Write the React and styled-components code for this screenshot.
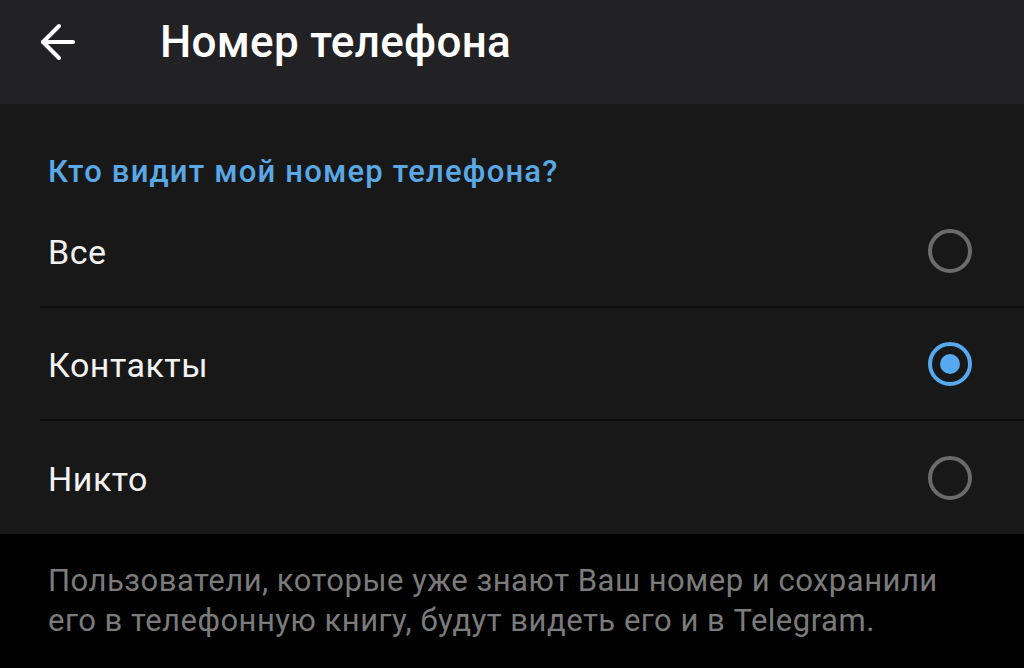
import React, { useState } from "react";
import styled, { createGlobalStyle } from "styled-components";

const GlobalStyle = createGlobalStyle`
  html, body {
    margin: 0;
    padding: 0;
    background: #000;
  }
  body {
    font-family: Roboto, "Noto Sans", sans-serif;
    -webkit-font-smoothing: antialiased;
  }
`;

const Screen = styled.div`
  width: 1024px;
  height: 668px;
  display: flex;
  flex-direction: column;
  background: #000;
  overflow: hidden;
`;

const Toolbar = styled.header`
  height: 104px;
  background: #222225;
  display: flex;
  align-items: center;
  padding-left: 34px;
  padding-bottom: 20px;
  box-sizing: border-box;
`;

const BackButton = styled.button`
  width: 48px;
  height: 48px;
  display: flex;
  align-items: center;
  justify-content: center;
  background: none;
  border: 0;
  padding: 0;
  cursor: pointer;
`;

const Title = styled.h1`
  margin: 0 0 0 78px;
  color: #fff;
  font-size: 44px;
  font-weight: 500;
  letter-spacing: 0.3px;
`;

const Section = styled.section`
  background: #181818;
  padding-top: 45px;
`;

const SectionHeader = styled.div`
  color: #5aa8e6;
  font-size: 31px;
  font-weight: 500;
  letter-spacing: 1.2px;
  padding-left: 48px;
  height: 46px;
  line-height: 46px;
`;

const Row = styled.label`
  display: flex;
  align-items: center;
  justify-content: space-between;
  height: 113px;
  padding-right: 52px;
  padding-left: ${(p) => (p.$last ? "48px" : "8px")};
  margin-left: ${(p) => (p.$last ? "0" : "40px")};
  box-sizing: border-box;
  cursor: pointer;
  border-bottom: ${(p) => (p.$last ? "none" : "2px solid #0c0c0c")};
`;

const RowText = styled.span`
  color: #f2f2f2;
  font-size: 34px;
  font-weight: 400;
  letter-spacing: 0.5px;
  padding-top: 2px;
`;

const Radio = styled.span`
  width: 44px;
  height: 44px;
  border-radius: 50%;
  box-sizing: border-box;
  border: 4px solid ${(p) => (p.$checked ? "#57a9ee" : "#6b6b6b")};
  display: flex;
  align-items: center;
  justify-content: center;

  &::after {
    content: "";
    width: 20px;
    height: 20px;
    border-radius: 50%;
    background: #57a9ee;
    display: ${(p) => (p.$checked ? "block" : "none")};
  }
`;

const Hint = styled.p`
  margin: 0;
  padding: 27px 40px 0 48px;
  color: #7b7b7b;
  font-size: 31px;
  letter-spacing: 0.5px;
  line-height: 40px;
  white-space: nowrap;
`;

const options = ["Все", "Контакты", "Никто"];

export default function App() {
  const [selected, setSelected] = useState("Контакты");

  return (
    <>
      <GlobalStyle />
      <Screen>
        <Toolbar>
          <BackButton aria-label="Назад">
            <svg width="48" height="48" viewBox="0 0 24 24" fill="none" stroke="#fff" strokeWidth="2" strokeLinecap="round" strokeLinejoin="round">
              <path d="M19.5 12H4.5" />
              <path d="M12.5 4L4.5 12l8 8" />
            </svg>
          </BackButton>
          <Title>Номер телефона</Title>
        </Toolbar>
        <Section>
          <SectionHeader>Кто видит мой номер телефона?</SectionHeader>
          {options.map((o, i) => (
            <Row key={o} $last={i === options.length - 1} onClick={() => setSelected(o)}>
              <RowText>{o}</RowText>
              <Radio $checked={selected === o} />
            </Row>
          ))}
        </Section>
        <Hint>
          Пользователи, которые уже знают Ваш номер и сохранили
          <br />
          его в телефонную книгу, будут видеть его и в Telegram.
        </Hint>
      </Screen>
    </>
  );
}
